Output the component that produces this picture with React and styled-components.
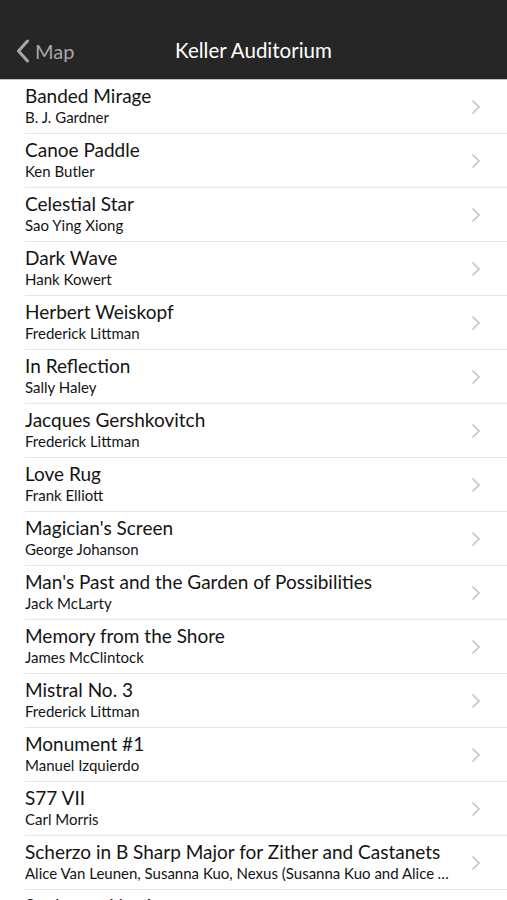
import React from "react";
import styled, { createGlobalStyle } from "styled-components";

const Global = createGlobalStyle`
  html, body { margin: 0; padding: 0; background: #ffffff; }
  body { font-family: "Lato", "Open Sans", sans-serif; -webkit-font-smoothing: antialiased; }
  #root { width: 507px; height: 900px; overflow: hidden; }
`;

const Page = styled.div`
  width: 507px;
  height: 900px;
  overflow: hidden;
  display: flex;
  flex-direction: column;
  background: #fff;
`;

const NavBar = styled.header`
  flex: 0 0 auto;
  height: 80px;
  background: #262626;
  border-bottom: 1px solid #c2c2c2;
  display: grid;
  grid-template-columns: 1fr auto 1fr;
  align-items: end;
  padding: 0 0 16px 0;
  box-sizing: border-box;
`;

const Back = styled.div`
  display: flex;
  align-items: center;
  gap: 5px;
  padding-left: 16px;
  color: #a8a8a8;
  font-size: 20px;
`;

const Title = styled.div`
  color: #ffffff;
  font-size: 20.5px;
  text-align: center;
  padding-bottom: 1px;
`;

const List = styled.ul`
  list-style: none;
  margin: 0;
  padding: 0;
`;

const Row = styled.li`
  display: flex;
  align-items: flex-start;
  margin-left: 25px;
  height: 54px;
  box-sizing: border-box;
  border-bottom: 1px solid #e6e6e6;
  padding: 4px 26px 0 0;
`;

const Texts = styled.div`
  flex: 1;
  min-width: 0;
  display: flex;
  flex-direction: column;
`;

const Name = styled.div`
  font-size: 19px;
  line-height: 23px;
  color: #141414;
  white-space: nowrap;
  overflow: hidden;
  text-overflow: ellipsis;
`;

const Artist = styled.div`
  font-size: 15px;
  line-height: 20px;
  color: #141414;
  white-space: nowrap;
  overflow: hidden;
  text-overflow: ellipsis;
  padding-right: 6px;
`;

const ChevronBox = styled.div`
  flex: 0 0 auto;
  align-self: center;
  margin: -3px 0 0 12px;
  display: flex;
`;

const Chevron = () => (
  <ChevronBox>
    <svg width="10" height="16" viewBox="0 0 10 16">
      <path d="M1.5 1.5 L8 8 L1.5 14.5" fill="none" stroke="#c4c4c4" strokeWidth="1.6" />
    </svg>
  </ChevronBox>
);

const BackChevron = () => (
  <svg width="14" height="24" viewBox="0 0 14 24">
    <path d="M11.5 2 L2.5 12 L11.5 22" fill="none" stroke="#a8a8a8" strokeWidth="3" strokeLinecap="round" strokeLinejoin="round" />
  </svg>
);

const items = [
  ["Banded Mirage", "B. J. Gardner"],
  ["Canoe Paddle", "Ken Butler"],
  ["Celestial Star", "Sao Ying Xiong"],
  ["Dark Wave", "Hank Kowert"],
  ["Herbert Weiskopf", "Frederick Littman"],
  ["In Reflection", "Sally Haley"],
  ["Jacques Gershkovitch", "Frederick Littman"],
  ["Love Rug", "Frank Elliott"],
  ["Magician's Screen", "George Johanson"],
  ["Man's Past and the Garden of Possibilities", "Jack McLarty"],
  ["Memory from the Shore", "James McClintock"],
  ["Mistral No. 3", "Frederick Littman"],
  ["Monument #1", "Manuel Izquierdo"],
  ["S77 VII", "Carl Morris"],
  ["Scherzo in B Sharp Major for Zither and Castanets", "Alice Van Leunen, Susanna Kuo, Nexus (Susanna Kuo and Alice Van Leunen)"],
  ["Sculpture No. 1", "Lee Kelly"],
];

export default function App() {
  return (
    <Page>
      <Global />
      <NavBar>
        <Back>
          <BackChevron />
          <span>Map</span>
        </Back>
        <Title>Keller Auditorium</Title>
        <div />
      </NavBar>
      <List>
        {items.map(([n, a]) => (
          <Row key={n}>
            <Texts>
              <Name>{n}</Name>
              <Artist>{a}</Artist>
            </Texts>
            <Chevron />
          </Row>
        ))}
      </List>
    </Page>
  );
}
